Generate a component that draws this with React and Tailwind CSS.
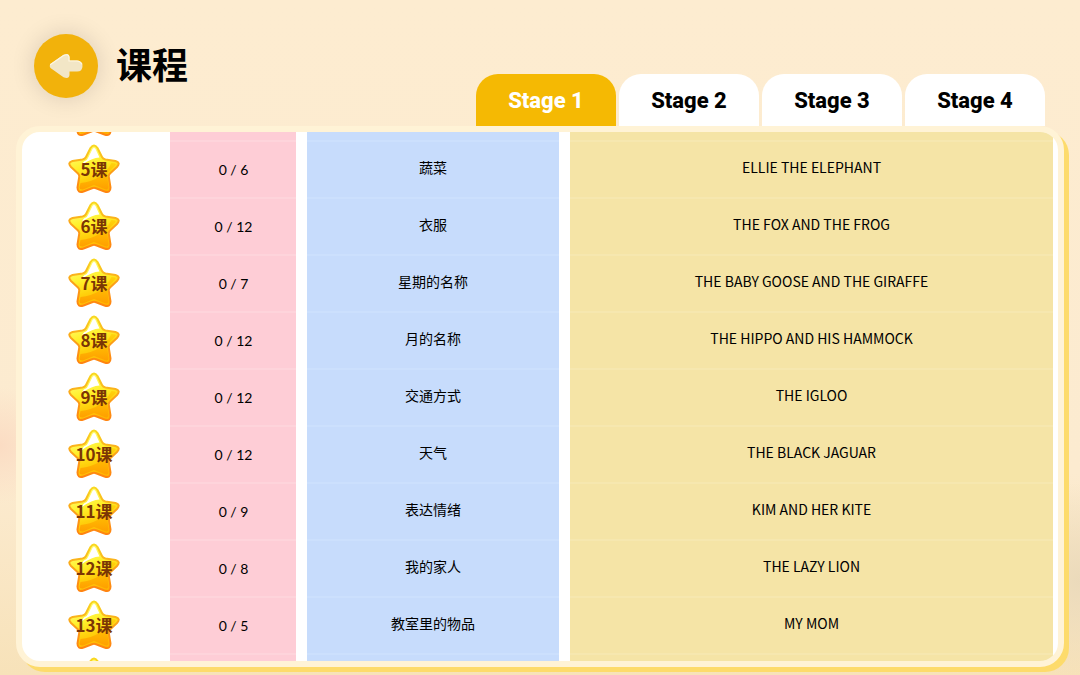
import { useState } from "react"

const stages = ["Stage 1", "Stage 2", "Stage 3", "Stage 4"]

// rows without a label are the ones scrolled half out of view
const lessons = [
  { id: 4 },
  { id: 5, label: "5课", count: "0 / 6", topic: "蔬菜", story: "ELLIE THE ELEPHANT" },
  { id: 6, label: "6课", count: "0 / 12", topic: "衣服", story: "THE FOX AND THE FROG" },
  { id: 7, label: "7课", count: "0 / 7", topic: "星期的名称", story: "THE BABY GOOSE AND THE GIRAFFE" },
  { id: 8, label: "8课", count: "0 / 12", topic: "月的名称", story: "THE HIPPO AND HIS HAMMOCK" },
  { id: 9, label: "9课", count: "0 / 12", topic: "交通方式", story: "THE IGLOO" },
  { id: 10, label: "10课", count: "0 / 12", topic: "天气", story: "THE BLACK JAGUAR" },
  { id: 11, label: "11课", count: "0 / 9", topic: "表达情绪", story: "KIM AND HER KITE" },
  { id: 12, label: "12课", count: "0 / 8", topic: "我的家人", story: "THE LAZY LION" },
  { id: 13, label: "13课", count: "0 / 5", topic: "教室里的物品", story: "MY MOM" },
  { id: 14 },
]

function StarDefs() {
  return (
    <svg className="absolute size-0" aria-hidden="true">
      <defs>
        <linearGradient id="starFill" x1="0.3" y1="0.1" x2="0.6" y2="1">
          <stop offset="0" stopColor="#fffb70" />
          <stop offset="0.35" stopColor="#fff02a" />
          <stop offset="0.65" stopColor="#ffd00c" />
          <stop offset="1" stopColor="#ffb400" />
        </linearGradient>
        <linearGradient id="starShade" x1="0" y1="0" x2="0" y2="1">
          <stop offset="0" stopColor="#ffc800" stopOpacity="0.6" />
          <stop offset="1" stopColor="#ff9f00" />
        </linearGradient>
        <linearGradient id="starEdge" x1="0" y1="0" x2="0" y2="1">
          <stop offset="0" stopColor="#f9d820" />
          <stop offset="0.45" stopColor="#fba51a" />
          <stop offset="1" stopColor="#ff8410" />
        </linearGradient>
      </defs>
    </svg>
  )
}

function Star() {
  return (
    <svg viewBox="0 0 52 50" className="col-start-1 row-start-1 h-[50px] w-[52px]" aria-hidden="true">
      <path
        d="M22.500 4 Q26 -1 29.500 4 L34 13 Q35 15 37.500 15.500 L47.500 17 Q53 18.500 49 23 L42 29.500 Q40.500 31 40.800 33 L42.500 43.500 Q42.500 49.500 36.500 47.500 L28 44.200 Q26 43.500 24 44.200 L15.500 47.500 Q9.500 49.500 9.500 43.500 L11.200 33 Q11.500 31 10 29.500 L3 23 Q-1 18.500 4.500 17 L14.500 15.500 Q17 15 18 13 Z"
        fill="url(#starFill)"
        stroke="url(#starEdge)"
        strokeWidth="2"
        strokeLinejoin="round"
      />
      <path
        d="M12.500 39 Q34 37 43.500 19 L47 19.500 Q48.500 20 47 21.500 L39 29.500 L40.500 43 Q40.500 46.500 36.500 45 L26 41 L15 45.500 Q11.500 46 11.500 43.500 Z"
        fill="url(#starShade)"
      />
      <path d="M24.500 5 Q26 2.800 27.500 5 L31.500 13.500 Q24 13.500 14 21 Q14.500 18.500 16 17.500 Q19 17 20 14 Z" fill="#ffffff" />
    </svg>
  )
}

export default function App() {
  const [activeStage, setActiveStage] = useState("Stage 1")

  return (
    <div className="flex h-screen flex-col bg-[radial-gradient(circle_at_0%_66%,#fbdcc3_0%,transparent_5%),radial-gradient(circle_at_100%_86%,#ebdabb_0%,transparent_8%),linear-gradient(to_bottom,#fdecd0_0%,#fcebd0_70%,#f7e2b9_100%)] px-4 pb-2 font-['Noto_Sans_CJK_SC',sans-serif] text-black">
      <StarDefs />
      <header className="flex h-[126px] shrink-0 items-end justify-between pr-[19px]">
        <div className="flex items-center gap-[18px] self-start pt-[34px] pl-[18px]">
          <button
            aria-label="Back"
            className="flex size-16 items-center justify-center rounded-full bg-[#f2b20b] shadow-[0_0_24px_rgba(0,0,0,0.14)]"
          >
            <svg viewBox="0 0 34 26" className="h-[26px] w-[34px]" aria-hidden="true">
              <path
                d="M1.500 11 L14.500 1.800 Q20 -0.500 20.500 4 V7.500 H28 Q33.500 8 33.500 13 Q33.500 18.500 28 18.500 H20.500 V22 Q20 26.500 14.500 24.200 L1.500 15 Q0 13 1.500 11 Z"
                fill="#f2e6c6"
              />
              <path
                d="M1.500 11.500 L14.500 2.500 Q19.500 0.500 20 4 V8 H28 Q31.500 8.200 32.800 11"
                fill="none"
                stroke="#fdf6e2"
                strokeWidth="1.200"
                strokeLinecap="round"
              />
            </svg>
          </button>
          <h1 className="pb-1.5 text-4xl font-bold">课程</h1>
        </div>
        <nav className="flex gap-[3px]">
          {stages.map((stage) => (
            <button
              key={stage}
              onClick={() => setActiveStage(stage)}
              className={`h-[52px] w-[140px] rounded-t-[22px] font-[Roboto,sans-serif] text-[22px] font-extrabold ${
                activeStage === stage ? "bg-[#f5b903] text-white" : "bg-white text-black"
              }`}
            >
              {stage}
            </button>
          ))}
        </nav>
      </header>

      <main className="min-h-0 flex-1 overflow-hidden rounded-3xl border-[6px] border-[#fff3d6] bg-white shadow-[5px_5px_0_#fddb6b]">
        <table className="-mt-[49px] w-full table-fixed border-collapse text-center text-sm">
          <colgroup>
            <col className="w-[14.3%]" />
            <col className="w-[13.2%]" />
            <col className="w-[25.4%]" />
            <col />
          </colgroup>
          <tbody>
            {lessons.map((lesson) => (
              <tr key={lesson.id}>
                <td className="p-0">
                  <div className="grid h-[57px] place-items-center pr-1">
                    <Star />
                    {lesson.label && (
                      <span className="z-10 col-start-1 row-start-1 text-[17px] leading-none font-bold text-[#7b3505]">
                        {lesson.label}
                      </span>
                    )}
                  </div>
                </td>
                <td className="p-0 pr-[11px]">
                  <div className="flex h-[57px] items-center justify-center border-t-2 border-[#fed4db] bg-[#fecdd6] pl-px font-[Lato,sans-serif]">
                    {lesson.count}
                  </div>
                </td>
                <td className="p-0 pr-[11px]">
                  <div className="flex h-[57px] items-center justify-center border-t-2 border-[#cce0fd] bg-[#c7dcfc] pb-[5px]">
                    {lesson.topic}
                  </div>
                </td>
                <td className="p-0 pr-[5px]">
                  <div className="flex h-[57px] items-center justify-center border-t-2 border-[#f6e7af] bg-[#f5e4a6] pb-[5px]">
                    {lesson.story}
                  </div>
                </td>
              </tr>
            ))}
          </tbody>
        </table>
      </main>
    </div>
  )
}
